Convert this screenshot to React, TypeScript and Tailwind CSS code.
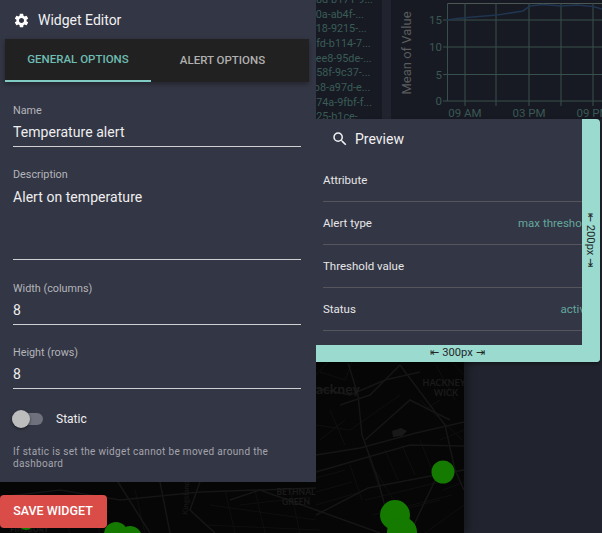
import { MdSettings, MdSearch } from 'react-icons/md';

const tableRows = [
  'a38d-b171-9...',
  'c70a-ab4f-...',
  'e418-9215-...',
  '61fd-b114-7...',
  '2cee8-95de-...',
  '9458f-9c37-...',
  '3fb8-a97d-e...',
  '1074a-9fbf-f...',
  'd925-b1ce-...',
];

const previewRows = [
  { label: 'Attribute', value: '' },
  { label: 'Alert type', value: 'max threshold' },
  { label: 'Threshold value', value: '' },
  { label: 'Status', value: 'active' },
];

// street mesh of the dark map, east and west of the panels
const thinStreets = [
  'M316 425L350 430L400 395', 'M420 400L462 440', 'M375 470L400 510L440 500', 'M225 490L235 533', 'M255 490L265 533',
  'M290 488L300 533', 'M210 505L316 520', 'M320 372L345 380L352 362', 'M330 410L345 445', 'M350 465L362 500',
  'M368 455L380 490', 'M385 450L398 480', 'M402 445L415 475', 'M420 440L432 470', 'M425 410L440 400', 'M436 365L455 400',
  'M316 478L345 470', 'M316 492L352 482', 'M316 505L360 492', 'M365 500L440 482', 'M372 515L452 495', 'M425 533L464 505',
  'M240 505L310 497', 'M205 525L320 530', 'M60 500L70 533', 'M90 495L100 533', 'M135 490L145 533', 'M20 505L110 512',
  'M320 440L345 420', 'M330 360L316 375', 'M452 362L464 375', 'M440 440L464 430', 'M443 490L464 482',
];

const mainStreets = [
  'M316 455L360 448L416 433L464 422', 'M316 472L375 455L410 445L464 446', 'M316 515L368 488L420 478L464 470',
  'M348 363L358 395L362 435L378 480L392 533', 'M340 405L370 395L400 365', 'M400 365L445 425L455 470L464 490',
  'M365 440L410 400L450 420', 'M316 388L350 395L385 380L420 372', 'M440 470L410 533', 'M0 497L60 490L120 500L200 492L316 488',
  'M160 482L170 533', 'M200 482L190 510L215 533', 'M230 500L260 490L316 510L380 533', 'M118 482L150 533',
];

function Field({ label, value, tall }: { label: string; value: string; tall?: boolean }) {
  return (
    <div className={`flex flex-col ${tall ? 'mb-[1px]' : ''}`}>
      <span className="text-[10.8px] leading-[14px] text-[#b4b5bb]">{label}</span>
      <div className={`mt-[4px] border-b border-[#d0d0d3] pb-[4px] text-[14px] leading-[20px] tracking-[0.05px] text-[#eeeeef] ${tall ? 'h-[74px] pt-[1px]' : 'h-[25px]'}`}>
        {value}
      </div>
    </div>
  );
}

function WidgetEditor() {
  return (
    <div className="absolute top-0 left-0 z-20 flex h-[482px] w-[316px] flex-col bg-[#333644]">
      <div className="flex h-[39px] items-center gap-[8px] pt-[1px] pl-[13px] text-white">
        <MdSettings className="h-[17px] w-[17px]" />
        <span className="text-[14px] text-[#f1f1f2]">Widget Editor</span>
      </div>
      <div className="mx-[5px] flex h-[43px] w-[304px] bg-[#212121] text-[11.5px] font-medium shadow-[0_2px_5px_rgba(0,0,0,0.35)]">
        <div className="flex w-[146px] items-center justify-center border-b-2 border-[#80cbc4] text-[#6fbcb2]">GENERAL OPTIONS</div>
        <div className="flex w-[143px] items-center justify-center text-[#b0b0b0]">ALERT OPTIONS</div>
      </div>
      <div className="flex flex-col gap-[21px] pt-[22px] pr-[15px] pl-[13px]">
        <Field label="Name" value="Temperature alert" />
        <Field label="Description" value="Alert on temperature" tall />
        <Field label="Width (columns)" value="8" />
        <Field label="Height (rows)" value="8" />
      </div>
      <div className="mt-[20px] flex h-[20px] items-center pl-[12px]">
        <div className="relative h-[12px] w-[31px] rounded-full bg-[#6f717c]">
          <div className="absolute top-[-3px] left-0 h-[18px] w-[18px] rounded-full bg-[#bdbdbd] shadow-[0_1px_3px_rgba(0,0,0,0.5)]" />
        </div>
        <span className="ml-[13px] text-[12px] text-[#eeeeef]">Static</span>
      </div>
      <p className="mt-[17px] px-[13px] text-[10px] leading-[11.5px] tracking-[0.32px] text-[#a4a5ad]">
        If static is set the widget cannot be moved around the dashboard
      </p>
    </div>
  );
}

function Preview() {
  return (
    <div className="absolute top-[119px] left-[316px] z-10 h-[243px] w-[284px] overflow-hidden rounded-r-[4px] bg-[#333644] shadow-[0_2px_4px_rgba(0,0,0,0.4)]">
      <div className="flex h-[40px] items-center gap-[6px] pl-[15px] text-[#f1f1f2]">
        <MdSearch className="h-[18px] w-[18px]" />
        <span className="text-[14px]">Preview</span>
      </div>
      <div className="flex w-[275px] flex-col pl-[7px] text-[11.5px]">
        {previewRows.map((row) => (
          <div key={row.label} className="flex h-[43px] items-center justify-between border-b border-[#55565c] pt-[1px] text-[#e6e6e8]">
            <span>{row.label}</span>
            <span className="text-[#64a79e]">{row.value}</span>
          </div>
        ))}
      </div>
      <div className="absolute top-0 right-0 bottom-0 flex w-[18px] items-center justify-center bg-[#9bdacf] pr-[2px] text-[11.2px] text-[#22282a]">
        <span className="[writing-mode:vertical-rl]">⇤ 200px ⇥</span>
      </div>
      <div className="absolute right-0 bottom-0 left-0 flex h-[17px] items-center justify-center bg-[#9bdacf] pr-[1px] text-[11.2px] text-[#22282a]">
        ⇤ 300px ⇥
      </div>
    </div>
  );
}

function TableCard() {
  return (
    <div className="absolute top-[-7px] left-[250px] h-[126px] w-[132px] overflow-hidden bg-[#171a22] pl-[54px] text-[10.8px] leading-[14.65px] text-[#3a5c58]">
      {tableRows.map((row) => (
        <div key={row} className="whitespace-nowrap">{row}</div>
      ))}
    </div>
  );
}

function ChartCard() {
  const xs = [465, 496, 529, 561, 593];
  const ys = [20, 47, 74.5, 101];
  return (
    <svg className="absolute top-0 left-[391px]" width="211" height="119" viewBox="391 0 211 119">
      <rect x="391" y="0" width="211" height="119" fill="#171a22" />
      <g stroke="#38504d" strokeWidth="1">
        <path d="M447.5 3.5H602" stroke="#4c5854" />
        <path d="M447.5 3.5V101" />
        {ys.map((y) => <path key={y} d={`M443 ${y}H602`} />)}
        {xs.map((x) => <path key={x} d={`M${x} 3V106`} />)}
      </g>
      <path
        d="M447 20L457 18.5L473 17L497 15L507 13.5L523 11L530 6L543 4.5L561 6L577 5L593 6.5L602 9"
        fill="none"
        stroke="#1f3550"
        strokeWidth="1.6"
      />
      <g fill="#3a5854" fontFamily="Roboto, sans-serif" fontSize="11.5" textAnchor="end">
        <text x="442" y="24">15</text>
        <text x="442" y="51">10</text>
        <text x="442" y="79">5</text>
        <text x="442" y="105">0</text>
      </g>
      <g fill="#3a5854" fontFamily="Roboto, sans-serif" fontSize="11.5" textAnchor="middle">
        <text x="465" y="117">09 AM</text>
        <text x="529" y="117">03 PM</text>
        <text x="593" y="117">09 PM</text>
      </g>
      <text x="411" y="53" transform="rotate(-90 411 53)" fill="#5a5c5d" fontFamily="Roboto, sans-serif" fontSize="13" textAnchor="middle">
        Mean of Value
      </text>
    </svg>
  );
}

function MapCard() {
  return (
    <svg className="absolute top-[300px] left-0 shadow-[4px_0_8px_rgba(0,0,0,0.35)]" width="464" height="233" viewBox="0 300 464 233">
      <rect x="0" y="300" width="464" height="233" fill="#060606" />
      <g fill="none" stroke="#0f0f0f" strokeWidth="1">
        {thinStreets.map((d) => <path key={d} d={d} />)}
      </g>
      <g fill="none" stroke="#151515" strokeWidth="1.5">
        {mainStreets.map((d) => <path key={d} d={d} />)}
      </g>
      <path d="M392 431l9-3 6 3-5 5-9 1z" fill="#181818" />
      <g fill="#1a1a1a" fontFamily="Lato, sans-serif" fontWeight="700">
        <text x="316" y="394" fontSize="14">ackney</text>
        <text x="444" y="386" fontSize="9" textAnchor="middle">HACKNEY</text>
        <text x="446" y="396" fontSize="9" textAnchor="middle">WICK</text>
        <text x="296" y="495" fontSize="8.5" textAnchor="middle">BETHNAL</text>
        <text x="296" y="505" fontSize="8.5" textAnchor="middle">GREEN</text>
        <text x="10" y="532" fontSize="8">FINSBURY</text>
      </g>
      <text x="188" y="515" transform="rotate(-88 188 515)" fill="#1a1a1a" fontFamily="Lato, sans-serif" fontSize="8">Kingsland</text>
      <g fill="#147a00">
        <circle cx="443" cy="472" r="11.5" />
        <circle cx="395" cy="515" r="15" />
        <circle cx="402" cy="532" r="15" />
        <circle cx="116" cy="534" r="12" />
        <circle cx="130" cy="538" r="12" />
        <circle cx="26" cy="522" r="8" />
      </g>
    </svg>
  );
}

export default function App() {
  return (
    <div className="relative h-[533px] w-[602px] overflow-hidden bg-[#21242e] font-['Roboto',sans-serif]">
      <TableCard />
      <ChartCard />
      <MapCard />
      <Preview />
      <WidgetEditor />
      <button className="absolute top-[495px] left-0 z-30 flex h-[33px] w-[107px] items-center justify-center rounded-[4px] bg-[#d94c48] pr-[1px] text-[12.5px] font-medium text-white">
        SAVE WIDGET
      </button>
    </div>
  );
}
